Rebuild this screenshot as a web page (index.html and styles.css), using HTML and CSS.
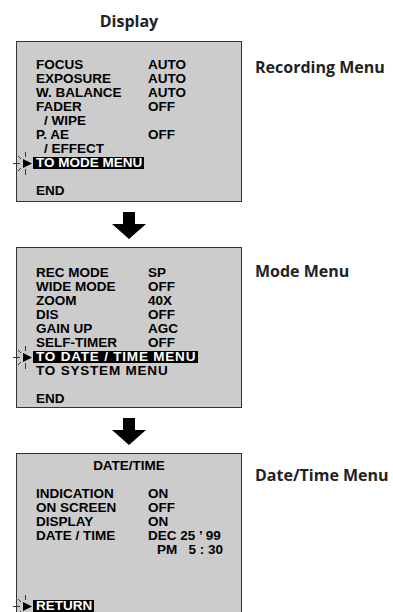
FILE: index.html
```html
<!DOCTYPE html>
<html>
<head>
<meta charset="utf-8">
<link rel="stylesheet" href="styles.css">
</head>
<body>
<div class="page">
  <div class="heading">Display</div>
  <div class="heading-side"></div>

  <div class="screen screen-rec">
    <div class="row"><span>FOCUS</span><span>AUTO</span></div>
    <div class="row"><span>EXPOSURE</span><span>AUTO</span></div>
    <div class="row"><span>W. BALANCE</span><span>AUTO</span></div>
    <div class="row"><span>FADER</span><span>OFF</span></div>
    <div class="row"><span class="sub">/ WIPE</span><span></span></div>
    <div class="row"><span>P. AE</span><span>OFF</span></div>
    <div class="row"><span class="sub">/ EFFECT</span><span></span></div>
    <div class="row"><span class="hl">TO MODE MENU<svg class="spark" viewBox="0 0 21 27" width="21" height="27"><g stroke="#333" stroke-width="1"><line x1="1" y1="13.5" x2="8" y2="13.5"/><line x1="13.5" y1="2" x2="13.5" y2="7"/><line x1="13.5" y1="19" x2="13.5" y2="25"/><line x1="6" y1="6" x2="9" y2="9"/><line x1="6" y1="21" x2="9" y2="18"/></g><polygon points="11,9 11,18 20,13.5" fill="#000"/></svg></span></div>
    <div class="row"></div>
    <div class="row"><span>END</span></div>
  </div>
  <div class="label label-rec">Recording Menu</div>

  <div class="arrow"><svg viewBox="0 0 34 27" width="34" height="27"><polygon points="11,0 23,0 23,12 34,12 17,27 0,12 11,12" fill="#000"/></svg></div>
  <div></div>

  <div class="screen screen-mode">
    <div class="row"><span>REC MODE</span><span>SP</span></div>
    <div class="row"><span>WIDE MODE</span><span>OFF</span></div>
    <div class="row"><span>ZOOM</span><span>40X</span></div>
    <div class="row"><span>DIS</span><span>OFF</span></div>
    <div class="row"><span>GAIN UP</span><span>AGC</span></div>
    <div class="row"><span>SELF-TIMER</span><span>OFF</span></div>
    <div class="row"><span class="hl wide">TO DATE / TIME MENU<svg class="spark" viewBox="0 0 21 27" width="21" height="27"><g stroke="#333" stroke-width="1"><line x1="1" y1="13.5" x2="8" y2="13.5"/><line x1="13.5" y1="2" x2="13.5" y2="7"/><line x1="13.5" y1="19" x2="13.5" y2="25"/><line x1="6" y1="6" x2="9" y2="9"/><line x1="6" y1="21" x2="9" y2="18"/></g><polygon points="11,9 11,18 20,13.5" fill="#000"/></svg></span></div>
    <div class="row"><span class="wide">TO SYSTEM MENU</span></div>
    <div class="row"></div>
    <div class="row"><span>END</span></div>
  </div>
  <div class="label label-mode">Mode Menu</div>

  <div class="arrow"><svg viewBox="0 0 34 27" width="34" height="27"><polygon points="11,0 23,0 23,12 34,12 17,27 0,12 11,12" fill="#000"/></svg></div>
  <div></div>

  <div class="screen screen-date">
    <div class="title">DATE/TIME</div>
    <div class="row"></div>
    <div class="row"><span>INDICATION</span><span>ON</span></div>
    <div class="row"><span>ON SCREEN</span><span>OFF</span></div>
    <div class="row"><span>DISPLAY</span><span>ON</span></div>
    <div class="row"><span>DATE / TIME</span><span>DEC 25 ’ 99</span></div>
    <div class="row"><span></span><span class="time">PM&nbsp;&nbsp; 5 : 30</span></div>
    <div class="row"></div>
    <div class="row"></div>
    <div class="row"></div>
    <div class="row"><span class="hl">RETURN<svg class="spark" viewBox="0 0 21 27" width="21" height="27"><g stroke="#333" stroke-width="1"><line x1="1" y1="13.5" x2="8" y2="13.5"/><line x1="13.5" y1="2" x2="13.5" y2="7"/><line x1="13.5" y1="19" x2="13.5" y2="25"/><line x1="6" y1="6" x2="9" y2="9"/><line x1="6" y1="21" x2="9" y2="18"/></g><polygon points="11,9 11,18 20,13.5" fill="#000"/></svg></span></div>
  </div>
  <div class="label label-date">Date/Time Menu</div>
</div>
</body>
</html>
```

FILE: styles.css
```css
html, body {
  margin: 0;
  padding: 0;
  background: #fff;
}

.page {
  display: grid;
  grid-template-columns: 226px auto;
  column-gap: 13px;
  padding-left: 16px;
  overflow: hidden;
  height: 612px;
}

.heading {
  height: 41px;
  display: flex;
  align-items: center;
  justify-content: center;
  font-family: "Open Sans", Lato, sans-serif;
  font-weight: 700;
  font-size: 16px;
  color: #222;
  box-sizing: border-box;
}

.screen {
  height: 161px;
  box-sizing: border-box;
  border: 1.5px solid #333;
  background: #cccccc;
  padding-left: 19px;
  font-family: "Liberation Sans", Arial, sans-serif;
  font-weight: 700;
  font-size: 13.5px;
  color: #000;
}

.screen-rec { padding-top: 15.5px; }
.screen-mode { padding-top: 17.5px; }
.screen-date { padding-top: 5px; height: 170px; }

.row {
  display: grid;
  grid-template-columns: 112px auto;
  height: 14px;
  line-height: 14px;
  white-space: nowrap;
}

.sub { padding-left: 8px; }

.wide { letter-spacing: 0.8px; }

.hl {
  position: relative;
  display: inline-block;
  justify-self: start;
  background: #000;
  color: #fff;
  line-height: 12px;
  height: 12px;
  margin-top: 1px;
  padding: 0 2px 0 3px;
  margin-left: -3px;
}

.spark {
  position: absolute;
  right: 100%;
  top: -7px;
  display: block;
}

.title {
  text-align: center;
  height: 14px;
  line-height: 14px;
  padding-right: 19px;
}

.time { padding-left: 9px; }

.arrow {
  height: 45px;
  display: flex;
  justify-content: center;
  padding-top: 10px;
  box-sizing: border-box;
}

.arrow svg { display: block; }

.label {
  font-family: "Open Sans", Lato, sans-serif;
  font-weight: 700;
  font-size: 16px;
  color: #222;
  line-height: 20px;
}

.label-rec { padding-top: 16px; }
.label-mode { padding-top: 14px; }
.label-date { padding-top: 12px; }
```
